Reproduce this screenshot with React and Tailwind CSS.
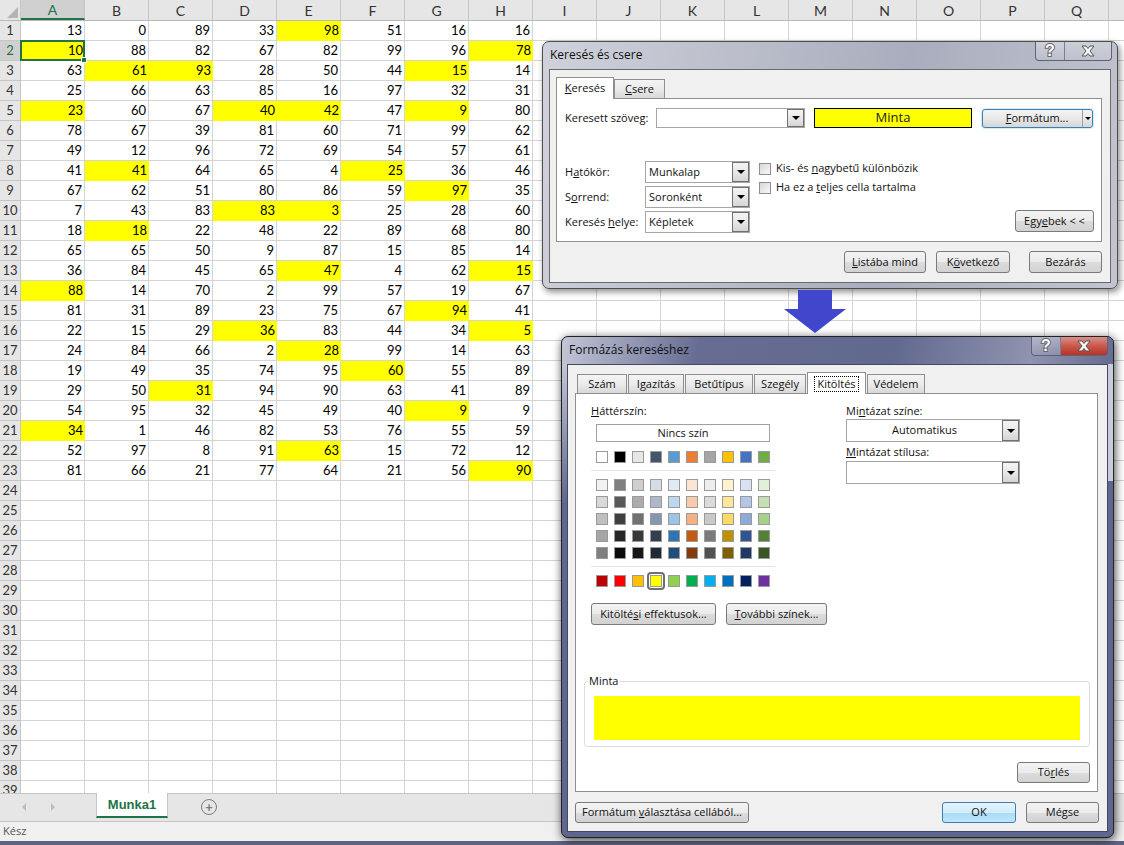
const rows = [
  [13, 0, 89, 33, 98, 51, 16, 16],
  [10, 88, 82, 67, 82, 99, 96, 78],
  [63, 61, 93, 28, 50, 44, 15, 14],
  [25, 66, 63, 85, 16, 97, 32, 31],
  [23, 60, 67, 40, 42, 47, 9, 80],
  [78, 67, 39, 81, 60, 71, 99, 62],
  [49, 12, 96, 72, 69, 54, 57, 61],
  [41, 41, 64, 65, 4, 25, 36, 46],
  [67, 62, 51, 80, 86, 59, 97, 35],
  [7, 43, 83, 83, 3, 25, 28, 60],
  [18, 18, 22, 48, 22, 89, 68, 80],
  [65, 65, 50, 9, 87, 15, 85, 14],
  [36, 84, 45, 65, 47, 4, 62, 15],
  [88, 14, 70, 2, 99, 57, 19, 67],
  [81, 31, 89, 23, 75, 67, 94, 41],
  [22, 15, 29, 36, 83, 44, 34, 5],
  [24, 84, 66, 2, 28, 99, 14, 63],
  [19, 49, 35, 74, 95, 60, 55, 89],
  [29, 50, 31, 94, 90, 63, 41, 89],
  [54, 95, 32, 45, 49, 40, 9, 9],
  [34, 1, 46, 82, 53, 76, 55, 59],
  [52, 97, 8, 91, 63, 15, 72, 12],
  [81, 66, 21, 77, 64, 21, 56, 90],
];

// row -> yellow column indexes
const yellow = {
  1: [4],
  2: [0, 7],
  3: [1, 2, 6],
  5: [0, 3, 4, 6],
  8: [1, 5],
  9: [6],
  10: [3, 4],
  11: [1],
  13: [4, 7],
  14: [0],
  15: [6],
  16: [3, 7],
  17: [4],
  18: [5],
  19: [2],
  20: [6],
  21: [0],
  22: [4],
  23: [7],
};

// last entry is the column that runs off the window, its letter is out of view
const columns = "ABCDEFGHIJKLMNOPQ".split("").concat("");
const rowNumbers = Array.from({ length: 39 }, (_, i) => i + 1);

const themeColors = ["#ffffff", "#000000", "#e7e6e6", "#44546a", "#5b9bd5", "#ed7d31", "#a5a5a5", "#ffc000", "#4472c4", "#70ad47"];
const shades = [
  ["#f2f2f2", "#7f7f7f", "#d0cece", "#d6dce4", "#deebf6", "#fbe5d5", "#ededed", "#fff2cc", "#d9e2f3", "#e2efd9"],
  ["#d8d8d8", "#595959", "#aeabab", "#adb9ca", "#bdd7ee", "#f7cbac", "#dbdbdb", "#fee599", "#b4c6e7", "#c5e0b3"],
  ["#bfbfbf", "#3f3f3f", "#757070", "#8496b0", "#9dc3e6", "#f4b183", "#c9c9c9", "#ffd965", "#8eaadb", "#a8d08d"],
  ["#a5a5a5", "#262626", "#3a3838", "#323f4f", "#2e75b5", "#c55a11", "#7b7b7b", "#bf9000", "#2f5496", "#538135"],
  ["#7f7f7f", "#0c0c0c", "#171616", "#222a35", "#1e4e79", "#833c0b", "#525252", "#7f6000", "#1f3864", "#375623"],
];
const standardColors = ["#c00000", "#ff0000", "#ffc000", "#ffff00", "#92d050", "#00b050", "#00b0f0", "#0070c0", "#002060", "#7030a0"];

function Swatch({ color, selected }) {
  return (
    <div className="relative w-3 h-3 shrink-0 border border-[#9a9a9a]" style={{ backgroundColor: color }}>
      {selected && <div className="absolute -inset-[4px] rounded-sm border-2 border-[#6f6f6f]" />}
    </div>
  );
}

function SwatchRow({ colors, selected }) {
  return (
    <div className="flex gap-[6px]">
      {colors.map((c, i) => (
        <Swatch key={i} color={c} selected={c === selected} />
      ))}
    </div>
  );
}

function WinButton({ className = "", children, primary }) {
  return (
    <button
      className={`flex items-center justify-center rounded-[3px] border text-[11px] text-[#111] ${
        primary
          ? "border-[#3c7fb1] bg-[linear-gradient(#e4f3fc_0%,#d2ecfb_50%,#a9dbf6_51%,#bfe6fb_100%)]"
          : "border-[#7a7a7a] bg-[linear-gradient(#f3f3f3_0%,#ebebeb_50%,#dcdcdc_51%,#d2d2d2_100%)]"
      } ${className}`}
    >
      {children}
    </button>
  );
}

function ArrowButton({ className = "" }) {
  return (
    <div className={`flex items-center justify-center shrink-0 border border-[#707070] bg-[linear-gradient(#f4f4f4_0%,#e8e8e8_50%,#d5d5d5_100%)] ${className}`}>
      <div className="w-0 h-0 border-x-[4px] border-x-transparent border-t-[4px] border-t-black" />
    </div>
  );
}

function Combo({ className = "", center, children }) {
  return (
    <div className={`flex items-stretch bg-white border border-[#a6a6a6] text-[11px] text-[#111] ${className}`}>
      <div className={`flex-1 flex items-center px-[3px] ${center ? "justify-center" : ""}`}>{children}</div>
      <ArrowButton className="w-[17px]" />
    </div>
  );
}

function Checkbox({ children }) {
  return (
    <div className="flex items-center gap-[5px] h-[13px] text-[11px] text-[#111]">
      <div className="w-[12px] h-[12px] border border-[#8e8e8e] bg-[linear-gradient(135deg,#d8d8d8,#f8f8f8)]" />
      <span>{children}</span>
    </div>
  );
}

function Caption({ title, active }) {
  return (
    <div className="flex items-start justify-between h-[27px] shrink-0 pl-[7px] pr-[5px]">
      <span className="mt-[4px] text-[12px] leading-[18px] text-[#111]">{title}</span>
      <div className="flex h-[19px] rounded-b-[4px] border border-t-0 border-[#5f6372] overflow-hidden">
        <div className="w-[29px] flex items-center justify-center border-r border-[#7d808c] font-['Liberation_Sans',sans-serif] text-[16px] font-bold text-white [-webkit-text-stroke:2px_#666] [paint-order:stroke_fill] bg-[linear-gradient(#ffffff55,#ffffff11)]">?</div>
        <div className={`w-[46px] flex items-center justify-center ${active ? "bg-[linear-gradient(#d9908a_0%,#c9584d_50%,#b93225_100%)]" : "bg-[linear-gradient(#ffffff44,#ffffff11)]"}`}>
          <svg width="16" height="12" viewBox="0 0 16 12">
            <path d="M2 1H6L8 3.5L10 1H14L10 6L14 11H10L8 8.5L6 11H2L6 6Z" fill="#f6f6f6" stroke="#555" strokeWidth="1" />
          </svg>
        </div>
      </div>
    </div>
  );
}

function Tab({ className = "", selected, children }) {
  return (
    <div
      className={`flex items-center justify-center border border-[#8e8f8f] text-[11px] text-[#111] ${
        selected
          ? "relative z-10 bg-white border-b-0 -mb-px h-[22px]"
          : "h-[19px] border-b-0 bg-[linear-gradient(#f4f4f4_0%,#ebebeb_50%,#d8d8d8_100%)]"
      } ${className}`}
    >
      {children}
    </div>
  );
}

function FindDialog() {
  return (
    <div className="absolute left-[542px] top-[41px] w-[576px] h-[248px] z-10 flex flex-col rounded-[7px] border border-[#4d4d4d] shadow-[2px_3px_6px_rgba(0,0,0,0.45)] font-['Open_Sans',sans-serif] bg-[linear-gradient(100deg,#cfd2da_0%,#a9adbd_60%,#c2c5d0_100%)]">
      <Caption title="Keresés és csere" />
      <div className="flex-1 mx-[6px] mb-[5px] px-[6px] pt-[6px] bg-[#f0f0f0] border border-[#6a6a6a] flex flex-col">
        <div className="flex items-end h-[22px]">
          <Tab selected className="w-[58px]"><span><u>K</u>eresés</span></Tab>
          <Tab className="w-[51px]"><span><u>C</u>sere</span></Tab>
        </div>
        <div className="w-[546px] h-[144px] bg-white border border-[#8e8f8f] pl-[8px] pr-[7px] pt-[9px] flex flex-col">
          <div className="flex items-center h-[20px]">
            <span className="w-[91px] text-[11px] text-[#111]">Keresett szöve<u>g</u>:</span>
            <Combo className="w-[149px] h-[20px]" />
            <div className="ml-[9px] w-[158px] h-[20px] bg-[#ffff00] border border-black flex items-center justify-center text-[13px] text-[#222]">Minta</div>
            <div className="ml-[10px] w-[111px] h-[19px] flex rounded-[3px] border border-[#3c7fb1] bg-[linear-gradient(#f4f4f4_0%,#e9e9e9_50%,#d6d6d6_100%)] shadow-[0_0_0_1px_#d3edfb] text-[11px] text-[#111]">
              <div className="flex-1 flex items-center justify-center pl-[9px]"><span><u>F</u>ormátum...</span></div>
              <div className="w-[10px] flex items-center justify-center border-l border-[#a0a0a0]">
                <div className="w-0 h-0 border-x-[3px] border-x-transparent border-t-[3px] border-t-black" />
              </div>
            </div>
          </div>
          <div className="flex mt-[33px]">
            <div className="w-[80px] flex flex-col gap-[3px] text-[11px] leading-[22px] text-[#111]">
              <span>H<u>a</u>tókör:</span>
              <span>S<u>o</u>rrend:</span>
              <span>Keresés <u>h</u>elye:</span>
            </div>
            <div className="w-[105px] flex flex-col gap-[3px]">
              <Combo className="h-[22px]">Munkalap</Combo>
              <Combo className="h-[22px]">Soronként</Combo>
              <Combo className="h-[22px]">Képletek</Combo>
            </div>
            <div className="ml-[9px] flex flex-col gap-[6px] pt-[1px]">
              <Checkbox>Kis- és <u>n</u>agybetű különbözik</Checkbox>
              <Checkbox>Ha ez a <u>t</u>eljes cella tartalma</Checkbox>
            </div>
            <div className="flex-1 flex justify-end items-end pb-[1px]">
              <WinButton className="w-[79px] h-[22px]"><span>Egy<u>e</u>bek &lt; &lt;</span></WinButton>
            </div>
          </div>
        </div>
        <div className="flex justify-end mt-[9px] pr-[2px]">
          <WinButton className="w-[82px] h-[22px]"><span><u>L</u>istába mind</span></WinButton>
          <WinButton className="ml-[10px] w-[74px] h-[22px]"><span>K<u>ö</u>vetkező</span></WinButton>
          <WinButton className="ml-[19px] w-[73px] h-[22px]">Bezárás</WinButton>
        </div>
      </div>
    </div>
  );
}

function FormatDialog() {
  return (
    <div className="absolute left-[561px] top-[336px] w-[553px] h-[502px] z-10 flex flex-col rounded-[7px] border border-[#222] shadow-[1px_2px_10px_rgba(0,0,0,0.75)] font-['Open_Sans',sans-serif] bg-[#5f6690]">
      <div className="absolute left-0 top-[27px] w-[5px] h-[140px] bg-[linear-gradient(#c3c6d6,#5f6690)]" />
      <div className="absolute right-0 top-[27px] w-[5px] h-[117px] bg-[#c8cbd8]" />
      <div className="rounded-t-[6px] bg-[linear-gradient(100deg,#c3c6d6_0%,#666c92_25%,#62698f_60%,#8f93b0_85%,#666c92_100%)]">
        <Caption title="Formázás kereséshez" active />
      </div>
      <div className="relative flex-1 mx-[5px] mb-[5px] px-[7px] pt-[6px] bg-[#f0f0f0] border border-[#444a5e] flex flex-col">
        <div className="flex items-end pl-[2px] gap-px h-[22px]">
          <Tab className="w-[50px]">Szám</Tab>
          <Tab className="w-[56px]">Igazítás</Tab>
          <Tab className="w-[68px]">Betűtípus</Tab>
          <Tab className="w-[52px]">Szegély</Tab>
          <Tab selected className="w-[59px]"><span className="px-[2px] border border-dotted border-black leading-[14px]">Kitöltés</span></Tab>
          <Tab className="w-[58px]">Védelem</Tab>
        </div>
        <div className="w-[523px] h-[399px] bg-white border border-[#8e8f8f] pt-[10px] px-[8px] flex flex-col">
          <div className="flex">
            <div className="w-[262px] shrink-0 pl-[7px] flex flex-col text-[11px] text-[#111]">
              <span className="h-[14px] leading-[14px]"><u>H</u>áttérszín:</span>
              <div className="ml-[5px] mt-[6px] w-[174px] h-[18px] border border-[#a0a0a0] flex items-center justify-center">Nincs szín</div>
              <div className="ml-[5px] mt-[9px]"><SwatchRow colors={themeColors} /></div>
              <div className="w-[184px] h-px bg-[#e3e3e3] mt-[7px]" />
              <div className="ml-[5px] mt-[8px] flex flex-col gap-[5px]">
                {shades.map((s, i) => (
                  <SwatchRow key={i} colors={s} />
                ))}
              </div>
              <div className="w-[184px] h-px bg-[#e3e3e3] mt-[7px]" />
              <div className="ml-[5px] mt-[8px]"><SwatchRow colors={standardColors} selected="#ffff00" /></div>
              <div className="flex mt-[16px] gap-[10px]">
                <WinButton className="w-[125px] h-[22px] shrink-0"><span>Kitölté<u>s</u>i effektusok...</span></WinButton>
                <WinButton className="w-[101px] h-[22px] shrink-0"><span><u>T</u>ovábbi színek...</span></WinButton>
              </div>
            </div>
            <div className="flex-1 text-[11px] text-[#111]">
              <div className="h-[14px] leading-[14px]">Mi<u>n</u>tázat színe:</div>
              <Combo center className="mt-[1px] w-[174px] h-[23px]">Automatikus</Combo>
              <div className="mt-[3px] h-[14px] leading-[14px]"><u>M</u>intázat stílusa:</div>
              <Combo className="mt-[2px] w-[174px] h-[23px]" />
            </div>
          </div>
          <div className="relative mt-[56px] w-[506px] h-[66px] rounded-[3px] border border-[#d5dfe5] px-[9px] pt-[14px]">
            <span className="absolute left-[3px] -top-[8px] px-[1px] bg-white text-[11px] leading-[14px] text-[#111]">Minta</span>
            <div className="w-[486px] h-[44px] bg-[#ffff00]" />
          </div>
          <div className="flex justify-end w-[506px] mt-[15px]">
            <WinButton className="w-[73px] h-[21px]"><span>Tö<u>r</u>lés</span></WinButton>
          </div>
        </div>
        <div className="flex mt-[10px] w-[524px]">
          <WinButton className="w-[174px] h-[21px]"><span>Formátum <u>v</u>álasztása cellából...</span></WinButton>
          <div className="flex-1" />
          <WinButton primary className="w-[74px] h-[21px]">OK</WinButton>
          <WinButton className="ml-[10px] w-[73px] h-[21px]">Mégse</WinButton>
        </div>
      </div>
    </div>
  );
}

function Sheet() {
  return (
    <div className="flex-1 min-h-0 overflow-hidden flex flex-col">
      <div className="flex h-[21px] shrink-0 bg-[#e6e6e6] border-b border-[#b9b9b9]">
        <div className="w-[21px] shrink-0 border-r border-[#c6c6c6] flex items-end justify-end p-[2px]">
          <div className="w-0 h-0 border-l-[11px] border-l-transparent border-b-[11px] border-b-[#b4b4b4]" />
        </div>
        {columns.map((c, i) => (
          <div
            key={i}
            className={`w-[64px] shrink-0 flex items-center justify-center border-r border-[#c6c6c6] text-[14px] ${
              c === "A" ? "bg-[#d0d0d0] border-b-2 border-b-[#217346] text-[#217346]" : "text-[#333]"
            }`}
          >
            {c}
          </div>
        ))}
      </div>
      {rowNumbers.map((n) => {
        const data = rows[n - 1];
        return (
          <div key={n} className="flex h-[20px] shrink-0">
            <div className={`w-[21px] shrink-0 flex items-center justify-center border-r border-b border-[#c6c6c6] text-[13px] ${n === 2 ? "bg-[#d0d0d0] text-[#217346]" : "bg-[#e6e6e6] text-[#333]"}`}>{n}</div>
            {columns.map((c, i) => {
              const isYellow = (yellow[n] || []).includes(i);
              const active = n === 2 && i === 0;
              return (
                <div
                  key={i}
                  className={`relative w-[64px] shrink-0 flex items-center justify-end pr-[2px] text-black ${isYellow ? "bg-[#ffff00]" : "border-r border-b border-[#d4d4d4]"}`}
                >
                  {data && i < 8 ? data[i] : ""}
                  {active && (
                    <div className="absolute -left-px -top-px w-[65px] h-[21px] border-2 border-[#217346] z-[1]">
                      <div className="absolute -right-[4px] -bottom-[4px] w-[6px] h-[6px] bg-[#217346] border border-white" />
                    </div>
                  )}
                </div>
              );
            })}
          </div>
        );
      })}
    </div>
  );
}

export default function App() {
  return (
    <div className="relative w-[1124px] h-[845px] overflow-hidden flex flex-col bg-white font-['Lato',sans-serif] text-[13px] text-black">
      <Sheet />
      <div className="h-[28px] shrink-0 flex items-start bg-[#e6e6e6] border-t border-[#c6c6c6]">
        <div className="w-[96px] h-[26px] flex items-center pl-[22px] gap-[25px]">
          <div className="w-0 h-0 border-y-[4px] border-y-transparent border-r-[4px] border-r-[#bdbdbd]" />
          <div className="w-0 h-0 border-y-[4px] border-y-transparent border-l-[4px] border-l-[#bdbdbd]" />
        </div>
        <div className="-mt-px w-[72px] h-[25px] bg-white border-x border-[#c6c6c6] border-b-2 border-b-[#217346] flex items-center justify-center font-['Liberation_Sans',sans-serif] font-bold text-[13px] text-[#217346]">Munka1</div>
        <div className="ml-[33px] h-[26px] flex items-center">
          <div className="w-[16px] h-[16px] rounded-full border border-[#7d7d7d] flex items-center justify-center text-[#7d7d7d] font-bold text-[13px] leading-none">+</div>
        </div>
      </div>
      <div className="h-[20px] shrink-0 bg-[#f0f0f0] border-t border-[#c6c6c6] flex items-center pl-[3px] font-['Open_Sans',sans-serif] text-[11px] text-[#555]">Kész</div>
      <div className="h-[4px] shrink-0 bg-[#5e6480]" />
      <FindDialog />
      <svg className="absolute left-[784px] top-[290px] z-20" width="62" height="43" viewBox="0 0 62 43">
        <path d="M14 0H48V19H62L31 43L0 19H14Z" fill="#4047cc" />
      </svg>
      <FormatDialog />
    </div>
  );
}
